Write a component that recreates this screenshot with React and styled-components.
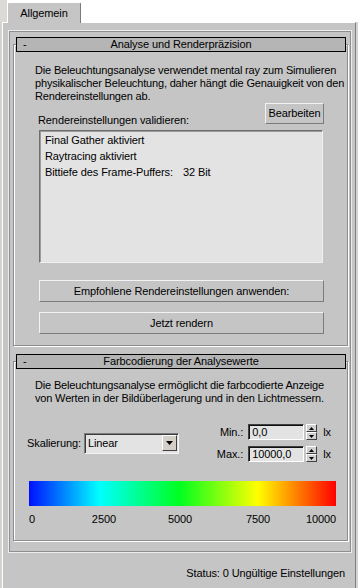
import React from 'react';
import styled, { createGlobalStyle } from 'styled-components';

const Global = createGlobalStyle`
  html, body { margin: 0; padding: 0; }
  body {
    width: 358px; height: 588px; overflow: hidden;
    background: #d6d3ce;
    font-family: "Liberation Sans", Arial, sans-serif;
    font-size: 11px; color: #000;
    letter-spacing: -0.1px;
  }
  * { box-sizing: border-box; }
`;

const PANEL = '#c5c5c5';
const FIELD = '#e3e3e3';

const Window = styled.div`
  width: 358px; height: 588px;
  display: flex; flex-direction: column;
  background: #d6d3ce;
`;

const TabRow = styled.div`
  height: 22px;
  display: flex; align-items: flex-end;
  background: #fff;
  padding-left: 7px;
  box-shadow: inset 7px 0 0 #dcdad6;
`;

const Tab = styled.div`
  width: 74px; height: 21px; margin-bottom: -1px;
  position: relative; z-index: 1;
  background: ${PANEL};
  border-top: 1px solid #fff; border-left: 1px solid #fff; border-right: 1px solid #7a7a7a;
  border-top-left-radius: 2px; border-top-right-radius: 2px;
  display: flex; align-items: center; justify-content: center;
  padding-bottom: 1px;
`;

const Pane = styled.div`
  flex: 1;
  margin: 0 2px;
  background: ${PANEL};
  border-top: 1px solid #fff; border-left: 1px solid #fff; border-right: 1px solid #808080;
  padding: 7px 0 0 5px;
  display: flex; flex-direction: column;
`;

const Rollouts = styled.div`
  width: 344px;
  border: 1px solid #ececec;
  box-shadow: inset 0 0 0 1px #8e8e8e;
  padding: 13px 3px 11px 4px;
  display: flex; flex-direction: column;
`;

const Group = styled.section`
  border: 1px solid #8c8c8c;
  box-shadow: inset 1px 1px 0 #fff, 1px 1px 0 #fff;
  display: flex; flex-direction: column;
  margin-top: ${p => p.$gap || 0}px;
`;

const TitleBar = styled.div`
  margin: -8px 1px 0 2px;
  height: 15px;
  border: 1px solid #000;
  background: #b5b5b5;
  display: grid; grid-template-columns: 20px 1fr 20px; align-items: center;
  line-height: 13px;
  position: relative;
`;

const Minus = styled.span`padding-left: 6px;`;
const TitleText = styled.span`text-align: center; white-space: nowrap;`;

const Body = styled.div`
  display: flex; flex-direction: column;
  padding: ${p => p.$pad};
`;

const Para = styled.p`
  margin: 0; line-height: 13px; white-space: nowrap;
  letter-spacing: -0.17px;
  padding-left: ${p => p.$indent || 0}px;
`;

const LabelRow = styled.div`
  display: flex; justify-content: space-between; align-items: flex-start;
  height: 24px;
`;

const Label = styled.span`
  margin-top: 11px; margin-left: 3px; line-height: 13px; white-space: nowrap;
`;

const RaisedButton = styled.button`
  font: inherit; color: #000; letter-spacing: inherit;
  background: ${PANEL};
  border: 1px solid; border-color: #f2f2f2 #7c7c7c #7c7c7c #f2f2f2;
  padding: 0;
  height: ${p => p.$h || 22}px;
  width: ${p => (p.$w ? p.$w + 'px' : 'auto')};
  margin: ${p => p.$m || 0};
  display: flex; align-items: center; justify-content: center;
  line-height: 13px;
`;

const ListBox = styled.div`
  margin: 3px 1px 0 4px;
  height: 133px;
  background: ${FIELD};
  border: 1px solid; border-color: #6e6e6e #f0f0f0 #f0f0f0 #6e6e6e;
  box-shadow: inset 1px 1px 0 #9a9a9a;
  padding: 1px 0 0 5px;
  display: flex; flex-direction: column;
`;

const ListItem = styled.div`
  height: 16px; line-height: 16px; white-space: nowrap;
  display: flex;
`;

const ItemKey = styled.span`width: 138px;`;

const Controls = styled.div`
  margin-top: 19px; height: 38px;
  display: flex; align-items: center; justify-content: space-between;
`;

const ScaleField = styled.div`
  display: flex; align-items: center; gap: 3px;
`;

const Select = styled.div`
  width: 95px; height: 21px;
  background: ${FIELD};
  border: 1px solid; border-color: #7c7c7c #f4f4f4 #f4f4f4 #7c7c7c;
  box-shadow: inset 1px 1px 0 #3c3c3c;
  display: flex; align-items: center; justify-content: space-between;
  padding: 1px 1px 1px 3px;
`;

const ArrowButton = styled.div`
  width: 15px; height: 16px;
  background: #d4d0c8;
  border: 1px solid; border-color: #fff #404040 #404040 #fff;
  display: flex; align-items: center; justify-content: center;
`;

const Limits = styled.div`
  display: grid;
  grid-template-columns: auto 56px 11px auto;
  column-gap: 2px; row-gap: 6px;
  align-items: center;
  margin-right: 5px;
`;

const LimitLabel = styled.span`justify-self: end; margin-right: 3px; line-height: 13px;`;
const Unit = styled.span`margin-left: 4px; line-height: 13px;`;

const NumInput = styled.div`
  height: 16px;
  background: ${FIELD};
  border: 1px solid; border-color: #404040 #fff #fff #404040;
  box-shadow: inset 1px 1px 0 #101010;
  display: flex; align-items: center;
  padding-left: 3px; line-height: 13px;
`;

const Spinner = styled.div`
  height: 16px;
  display: flex; flex-direction: column;
`;

const SpinBtn = styled.div`
  flex: 1;
  background: #d0d0d0;
  border: 1px solid; border-color: #fff #404040 #404040 #fff;
  display: flex; align-items: center; justify-content: center;
`;

const Gradient = styled.div`
  margin: 19px 0 0 2px;
  height: 25px;
  background: linear-gradient(to right, #0010ff 0%, #00ffff 23%, #00ff20 49%, #ffff00 74.5%, #ff0000 100%);
`;

const ScaleLabels = styled.div`
  position: relative;
  margin: 7px 0 0 2px;
  height: 13px; line-height: 13px;
`;

const Tick = styled.span`
  position: absolute; top: 0; white-space: nowrap;
`;

const Status = styled.div`
  width: 344px;
  margin-top: 14px;
  padding-right: 7px;
  text-align: right;
  line-height: 13px;
  white-space: nowrap;
`;

const Down = () => (
  <svg width="7" height="4" viewBox="0 0 7 4"><polygon points="0,0 7,0 3.5,4" fill="#000" /></svg>
);
const Up = () => (
  <svg width="5" height="3" viewBox="0 0 5 3"><polygon points="0,3 5,3 2.5,0" fill="#000" /></svg>
);
const SmallDown = () => (
  <svg width="5" height="3" viewBox="0 0 5 3"><polygon points="0,0 5,0 2.5,3" fill="#000" /></svg>
);

const Section = ({ title, gap, pad, children }) => (
  <Group $gap={gap}>
    <TitleBar>
      <Minus>-</Minus>
      <TitleText>{title}</TitleText>
      <span />
    </TitleBar>
    <Body $pad={pad}>{children}</Body>
  </Group>
);

const ticks = [
  { v: '0', style: { left: 0 } },
  { v: '2500', style: { left: '24.4%', transform: 'translateX(-50%)' } },
  { v: '5000', style: { left: '49.2%', transform: 'translateX(-50%)' } },
  { v: '7500', style: { left: '74.6%', transform: 'translateX(-50%)' } },
  { v: '10000', style: { right: 0 } },
];

export default function App() {
  return (
    <Window>
      <Global />
      <TabRow>
        <Tab>Allgemein</Tab>
      </TabRow>
      <Pane>
        <Rollouts>
          <Section title="Analyse und Renderpräzision" pad="12px 23px 11px 21px">
            <Para>
              Die Beleuchtungsanalyse verwendet mental ray zum Simulieren<br />
              physikalischer Beleuchtung, daher hängt die Genauigkeit von den<br />
              Rendereinstellungen ab.
            </Para>
            <LabelRow>
              <Label>Rendereinstellungen validieren:</Label>
              <RaisedButton $w={59} $h={21}>Bearbeiten</RaisedButton>
            </LabelRow>
            <ListBox>
              <ListItem>Final Gather aktiviert</ListItem>
              <ListItem>Raytracing aktiviert</ListItem>
              <ListItem><ItemKey>Bittiefe des Frame-Puffers:</ItemKey><span>32 Bit</span></ListItem>
            </ListBox>
            <RaisedButton $m="17px 0 0 4px">Empfohlene Rendereinstellungen anwenden:</RaisedButton>
            <RaisedButton $m="10px 0 0 4px">Jetzt rendern</RaisedButton>
          </Section>

          <Section title="Farbcodierung der Analysewerte" gap={15} pad="10px 11px 14px 13px">
            <Para $indent={8}>
              Die Beleuchtungsanalyse ermöglicht die farbcodierte Anzeige<br />
              von Werten in der Bildüberlagerung und in den Lichtmessern.
            </Para>
            <Controls>
              <ScaleField>
                <span>Skalierung:</span>
                <Select>
                  <span>Linear</span>
                  <ArrowButton><Down /></ArrowButton>
                </Select>
              </ScaleField>
              <Limits>
                <LimitLabel>Min.:</LimitLabel>
                <NumInput>0,0</NumInput>
                <Spinner><SpinBtn><Up /></SpinBtn><SpinBtn><SmallDown /></SpinBtn></Spinner>
                <Unit>lx</Unit>
                <LimitLabel>Max.:</LimitLabel>
                <NumInput>10000,0</NumInput>
                <Spinner><SpinBtn><Up /></SpinBtn><SpinBtn><SmallDown /></SpinBtn></Spinner>
                <Unit>lx</Unit>
              </Limits>
            </Controls>
            <Gradient />
            <ScaleLabels>
              {ticks.map(t => <Tick key={t.v} style={t.style}>{t.v}</Tick>)}
            </ScaleLabels>
          </Section>
        </Rollouts>
        <Status>Status: 0 Ungültige Einstellungen</Status>
      </Pane>
    </Window>
  );
}
